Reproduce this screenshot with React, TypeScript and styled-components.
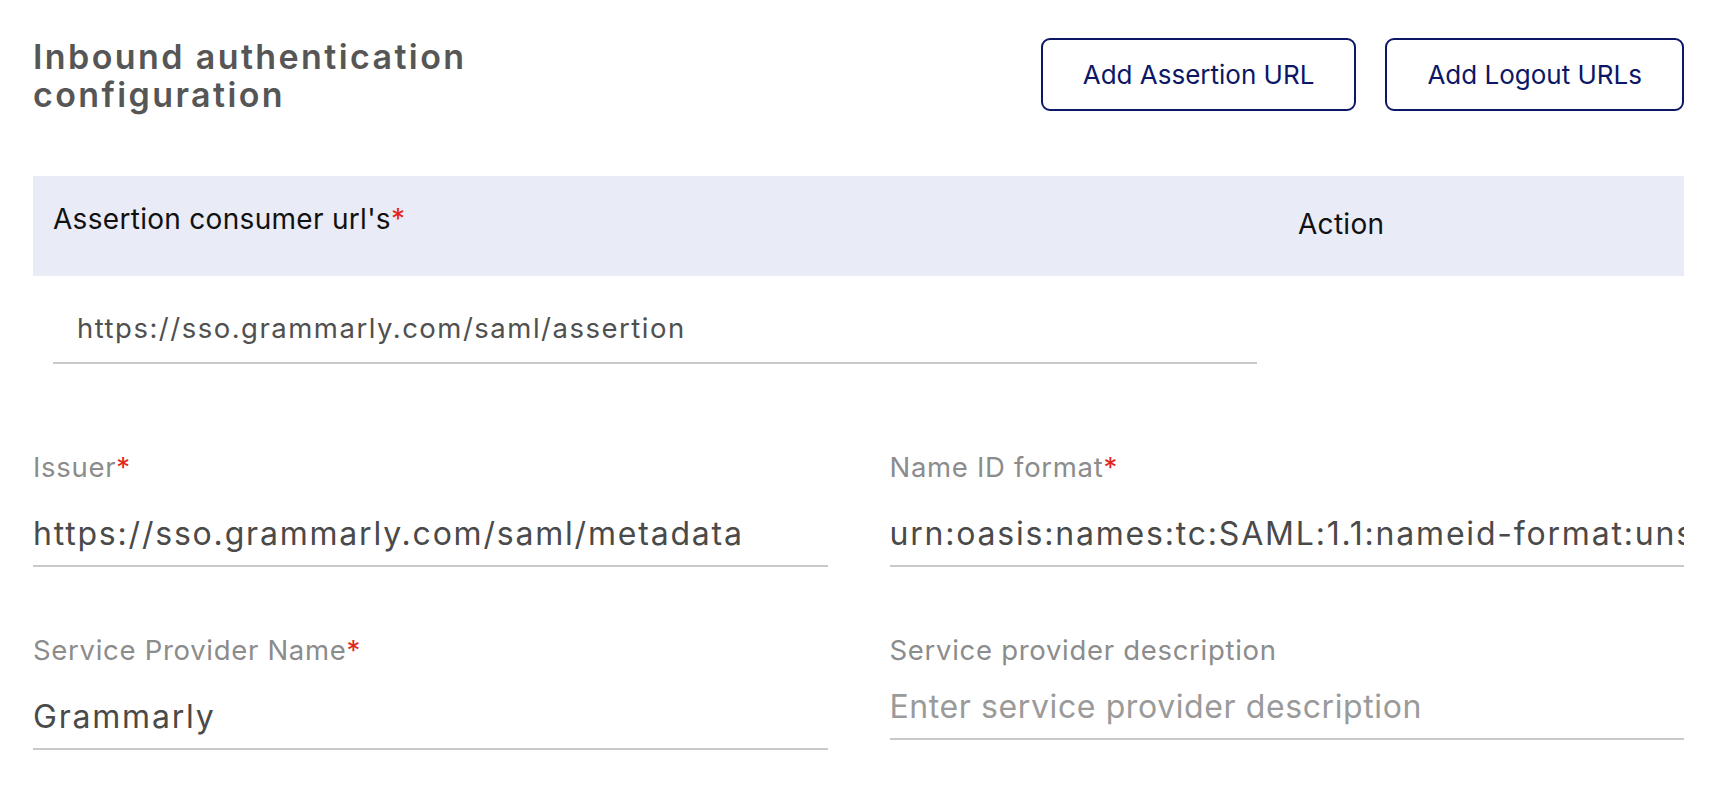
import React from 'react';
import styled, { createGlobalStyle } from 'styled-components';

const GlobalStyle = createGlobalStyle`
  html, body {
    margin: 0;
    padding: 0;
    background: #ffffff;
  }
  body {
    font-family: Inter, 'Noto Sans', 'Liberation Sans', sans-serif;
  }
`;

const NAVY = '#0c1766';

const App = () => {
  return (
    <>
      <GlobalStyle />
      <Page>
        <Header>
          <Title>
            Inbound authentication
            <br />
            configuration
          </Title>
          <ButtonGroup>
            <OutlineButton type="button">Add Assertion URL</OutlineButton>
            <OutlineButton type="button">Add Logout URLs</OutlineButton>
          </ButtonGroup>
        </Header>

        <UrlTable>
          <TableHead>
            <HeadCell>
              Assertion consumer url's<Required>*</Required>
            </HeadCell>
            <HeadCell $action>Action</HeadCell>
          </TableHead>
          <TableRow>
            <UrlCell>
              <UrlInput defaultValue="https://sso.grammarly.com/saml/assertion" />
            </UrlCell>
            <div />
          </TableRow>
        </UrlTable>

        <FormGrid>
          <Field>
            <Label>
              Issuer<Required>*</Required>
            </Label>
            <TextInput defaultValue="https://sso.grammarly.com/saml/metadata" />
          </Field>
          <Field>
            <Label>
              Name ID format<Required>*</Required>
            </Label>
            <TextInput defaultValue="urn:oasis:names:tc:SAML:1.1:nameid-format:unspecified" />
          </Field>
          <Field>
            <Label>
              Service Provider Name<Required>*</Required>
            </Label>
            <TextInput defaultValue="Grammarly" />
          </Field>
          <Field>
            <Label>Service provider description</Label>
            <TextInput $compact placeholder="Enter service provider description" />
          </Field>
        </FormGrid>
      </Page>
    </>
  );
};

export default App;

const Page = styled.div`
  padding: 38px 36px 40px 33px;
`;

const Header = styled.div`
  display: flex;
  justify-content: space-between;
  align-items: flex-start;
`;

const Title = styled.h1`
  margin: 0;
  font-size: 34px;
  line-height: 38px;
  font-weight: 600;
  color: #565656;
  letter-spacing: 2.4px;
`;

const ButtonGroup = styled.div`
  display: flex;
  gap: 29px;
`;

const OutlineButton = styled.button`
  height: 73px;
  padding: 0 40px;
  border: 2px solid ${NAVY};
  border-radius: 9px;
  background: #fff;
  color: ${NAVY};
  font-family: inherit;
  font-size: 26px;
  font-weight: 400;
  cursor: pointer;
`;

const UrlTable = styled.div`
  margin-top: 62px;
`;

const TableHead = styled.div`
  display: grid;
  grid-template-columns: 1265px 1fr;
  height: 100px;
  background: #e9ebf6;
`;

const HeadCell = styled.div<{ $action?: boolean }>`
  padding: ${({ $action }) => ($action ? '31px 0 0 0' : '26px 0 0 20px')};
  font-size: 28px;
  line-height: 34px;
  letter-spacing: 0.3px;
  color: #111;
`;

const Required = styled.span`
  color: #e0261b;
`;

const TableRow = styled.div`
  display: grid;
  grid-template-columns: 1265px 1fr;
`;

const UrlCell = styled.div`
  padding: 35px 41px 0 20px;
`;

const UrlInput = styled.input`
  display: block;
  width: 100%;
  box-sizing: border-box;
  height: 53px;
  line-height: 34px;
  padding: 0 0 17px 24px;
  margin: 0;
  border: none;
  border-bottom: 2px solid #c9c9c9;
  outline: none;
  background: transparent;
  font-family: inherit;
  font-size: 27.5px;
  letter-spacing: 1.5px;
  color: #505050;
`;

const FormGrid = styled.div`
  display: grid;
  grid-template-columns: 1fr 1fr;
  column-gap: 62px;
  row-gap: 66px;
  margin-top: 86px;
`;

const Field = styled.div`
  display: flex;
  flex-direction: column;
  min-width: 0;
`;

const Label = styled.label`
  font-size: 27.5px;
  line-height: 34px;
  letter-spacing: 0.7px;
  color: #8c8c8c;
`;

const TextInput = styled.input<{ $compact?: boolean }>`
  display: block;
  width: 100%;
  box-sizing: border-box;
  height: 59px;
  line-height: 40px;
  margin: ${({ $compact }) => ($compact ? '14px 0 0' : '24px 0 0')};
  padding: 5px 0 12px 0;
  border: none;
  border-bottom: 2px solid #c9c9c9;
  outline: none;
  background: transparent;
  font-family: inherit;
  font-size: 32px;
  letter-spacing: 1.8px;
  color: #4a4a4a;

  &::placeholder {
    color: #9a9a9a;
    letter-spacing: 0.6px;
  }
`;
